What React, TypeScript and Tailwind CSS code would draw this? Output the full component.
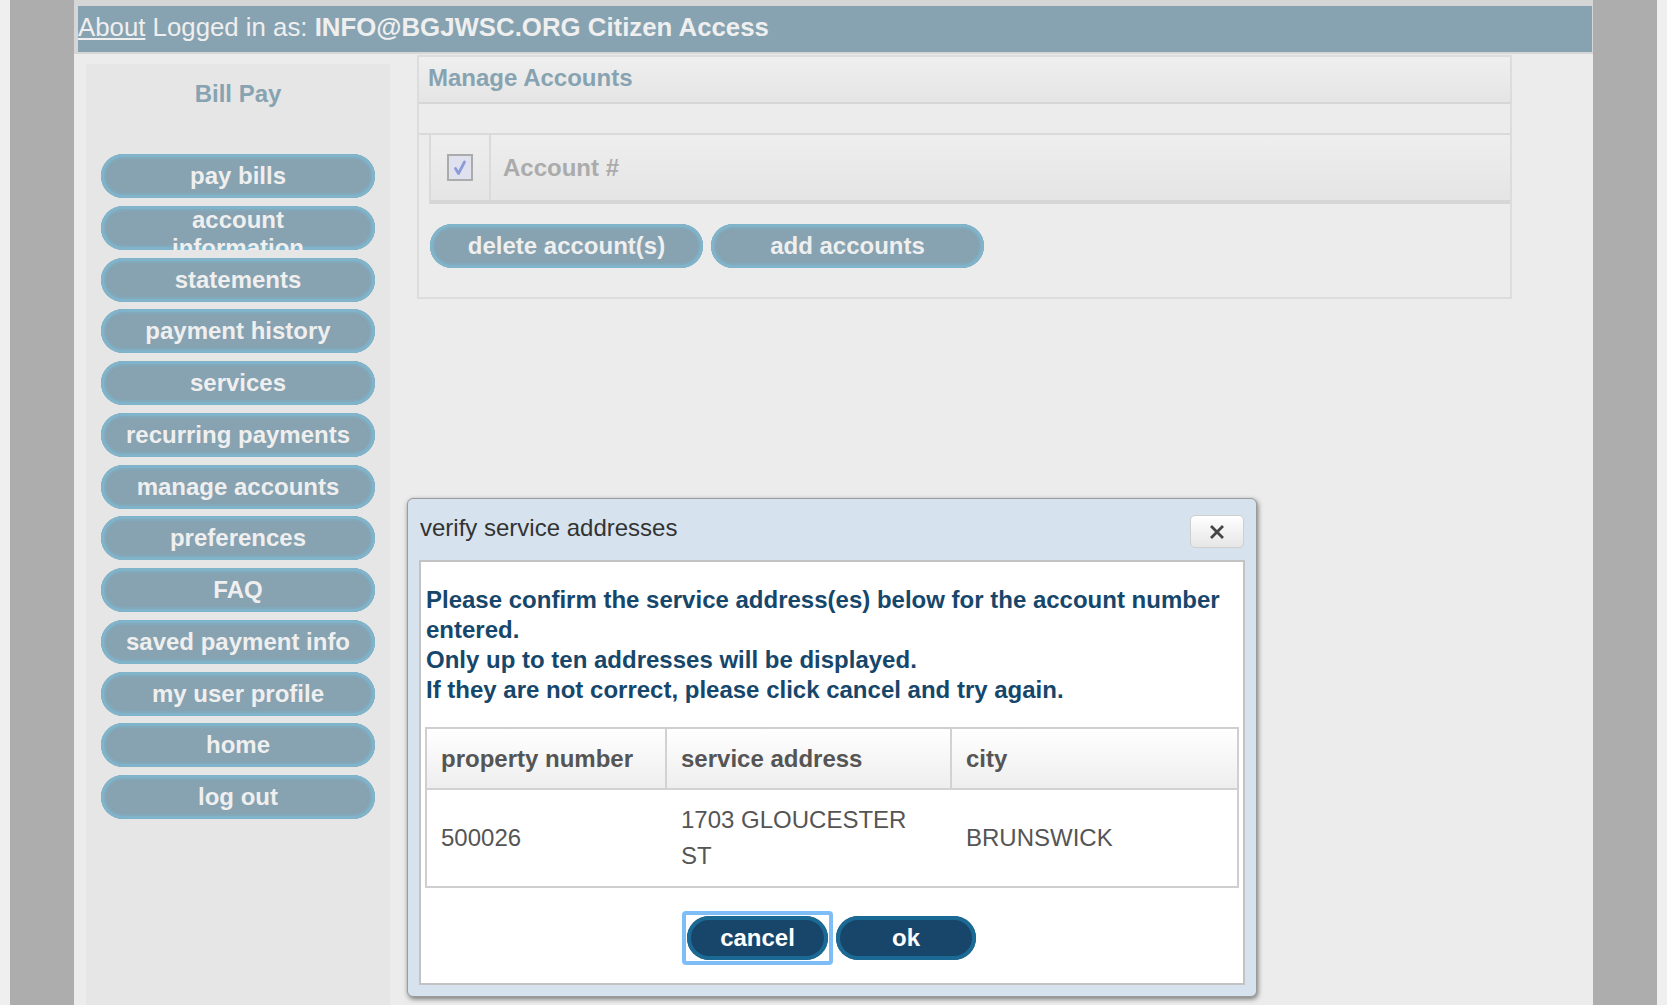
import React from "react";

const navItems = [
  "pay bills",
  "account information",
  "statements",
  "payment history",
  "services",
  "recurring payments",
  "manage accounts",
  "preferences",
  "FAQ",
  "saved payment info",
  "my user profile",
  "home",
  "log out",
];

function NavButton({ label }: { label: string }) {
  const wrap = label === "account information";
  return (
    <div
      className={`h-[44px] w-full shrink-0 rounded-full overflow-hidden bg-[#87a2b0] shadow-[inset_0_0_0_3px_#80b4ca,inset_0_0_2px_5px_#82aabd] px-[23px] flex justify-center text-center text-[24px] font-bold leading-[28px] text-[#efefef] ${
        wrap ? "items-start" : "items-center"
      }`}
    >
      <span>{label}</span>
    </div>
  );
}

function PanelButton({ label }: { label: string }) {
  return (
    <div className="h-[44px] w-[273px] rounded-full bg-[#87a2b0] shadow-[inset_0_0_0_3px_#80b4ca,inset_0_0_2px_5px_#82aabd] flex items-center justify-center text-[24px] font-bold leading-[28px] text-[#efefef]">
      {label}
    </div>
  );
}

function DarkButton({ label, w }: { label: string; w: string }) {
  return (
    <div
      className={`h-[44px] ${w} rounded-full bg-[#17466a] shadow-[inset_0_0_0_4px_#1b6a95] flex items-center justify-center text-[24px] font-bold leading-[28px] text-white`}
    >
      {label}
    </div>
  );
}

export default function App() {
  return (
    <div className="relative w-[1667px] h-[1005px] overflow-hidden flex bg-[#efefef] font-['Liberation_Sans',Arial,sans-serif]">
      <div className="w-[10px] shrink-0" />
      <div className="w-[64px] shrink-0 bg-[#adadad]" />
      <div className="w-[1519px] shrink-0 flex flex-col bg-[#d6d6d6]">
        <div className="h-[6px] shrink-0" />
        <header className="h-[46px] shrink-0 ml-[4px] mr-[1px] bg-[#87a3b1] flex items-center pb-[4px] text-[25.8px] leading-[30px] text-[#efefef] whitespace-nowrap">
          <span className="underline">About</span>
          <span>&nbsp;Logged in as:&nbsp;</span>
          <span className="font-bold">INFO@BGJWSC.ORG Citizen Access</span>
        </header>
        <div className="h-[2px] shrink-0" />
        <div className="flex-1 bg-[#ececec] flex items-start">
          <aside className="self-stretch mt-[10px] ml-[12px] w-[304px] shrink-0 bg-[#e6e6e6] px-[15px] flex flex-col">
            <div className="pt-[16px] text-center text-[24px] leading-[28px] font-bold text-[#87a3b1]">
              Bill Pay
            </div>
            <nav className="mt-[46px] flex flex-col gap-[7.75px]">
              {navItems.map((n) => (
                <NavButton key={n} label={n} />
              ))}
            </nav>
          </aside>
          <section className="ml-[27px] mt-[1px] w-[1095px] shrink-0 border-2 border-[#dcdcdc] bg-[#ececec]">
            <div className="h-[47px] bg-gradient-to-b from-[#efefef] to-[#e5e5e5] border-b-2 border-[#d6d6d6] flex items-center pl-[9px] pb-[3px] text-[24px] font-bold text-[#87a3b1]">
              Manage Accounts
            </div>
            <div className="h-[31px] border-b-2 border-[#dadada]" />
            <div className="ml-[10px] h-[69px] flex border-l-2 border-l-[#dadada] border-b-[4px] border-b-[#d6d6d6] bg-gradient-to-b from-[#eeeeee] to-[#e5e5e5]">
              <div className="w-[60px] shrink-0 border-r-2 border-[#dadada] flex items-center justify-center">
                <div className="w-[26px] h-[27px] border-2 border-[#ababab] bg-[#dfe2ee] flex items-center justify-center">
                  <svg width="18" height="18" viewBox="0 0 18 18">
                    <path
                      d="M4.5 9.5 L7.5 14.5 L13.5 3"
                      stroke="#8f9ad8"
                      strokeWidth="2.8"
                      fill="none"
                      strokeLinecap="round"
                      strokeLinejoin="round"
                    />
                  </svg>
                </div>
              </div>
              <div className="pl-[12px] flex items-center text-[24px] font-bold text-[#ababab]">
                Account #
              </div>
            </div>
            <div className="ml-[11px] mt-[20px] mb-[29px] flex gap-[8px]">
              <PanelButton label="delete account(s)" />
              <PanelButton label="add accounts" />
            </div>
          </section>
        </div>
      </div>
      <div className="w-[64px] shrink-0 bg-[#adadad]" />
      <div className="flex-1" />

      {/* Modal */}
      <div className="absolute left-[407px] top-[498px] w-[850px] h-[499px] rounded-[6px] border border-[#9b9b9b] bg-[#d6e3ee] shadow-[1px_2px_5px_rgba(0,0,0,0.5)] flex flex-col px-[11px] pb-[11px]">
        <div className="h-[61px] shrink-0 flex items-start justify-between">
          <span className="pt-[15px] pl-[1px] text-[24px] leading-[28px] text-[#333333]">
            verify service addresses
          </span>
          <div className="mt-[16px] mr-[1px] w-[54px] h-[33px] rounded-[5px] border border-[#cfcfcf] bg-gradient-to-b from-[#ffffff] to-[#e6e6e6] flex items-center justify-center">
            <svg width="14" height="14" viewBox="0 0 14 14">
              <path d="M2 2 L12 12 M12 2 L2 12" stroke="#454545" strokeWidth="2.8" strokeLinecap="square" />
            </svg>
          </div>
        </div>
        <div className="flex-1 bg-white border-2 border-[#c3c3c3] flex flex-col">
          <div className="pt-[23px] px-[5px] text-[24px] leading-[30px] font-bold text-[#16476b]">
            Please confirm the service address(es) below for the account number entered.
            <br />
            Only up to ten addresses will be displayed.
            <br />
            If they are not correct, please click cancel and try again.
          </div>
          <div className="mt-[22px] mx-[4px] border-2 border-[#cfcfcf] grid grid-cols-[240px_285px_1fr] text-[24px] text-[#555555]">
            <div className="h-[61px] border-r-2 border-b-2 border-[#d2d2d2] bg-gradient-to-b from-[#ffffff] to-[#eeeeee] flex items-center pl-[14px] font-bold">
              property number
            </div>
            <div className="h-[61px] border-r-2 border-b-2 border-[#d2d2d2] bg-gradient-to-b from-[#ffffff] to-[#eeeeee] flex items-center pl-[14px] font-bold">
              service address
            </div>
            <div className="h-[61px] border-b-2 border-[#d2d2d2] bg-gradient-to-b from-[#ffffff] to-[#eeeeee] flex items-center pl-[14px] font-bold">
              city
            </div>
            <div className="h-[96px] flex items-center pl-[14px] leading-[36px]">500026</div>
            <div className="h-[96px] flex items-center pl-[14px] pr-[14px] leading-[36px]">
              1703 GLOUCESTER ST
            </div>
            <div className="h-[96px] flex items-center pl-[14px] leading-[36px]">BRUNSWICK</div>
          </div>
          <div className="mt-[23px] pr-[6px] flex justify-center items-center">
            <div className="border-[4px] border-[#7fbdf7] rounded-[4px] p-[1px]">
              <DarkButton label="cancel" w="w-[141px]" />
            </div>
            <div className="ml-[3px]">
              <DarkButton label="ok" w="w-[140px]" />
            </div>
          </div>
        </div>
      </div>
    </div>
  );
}
